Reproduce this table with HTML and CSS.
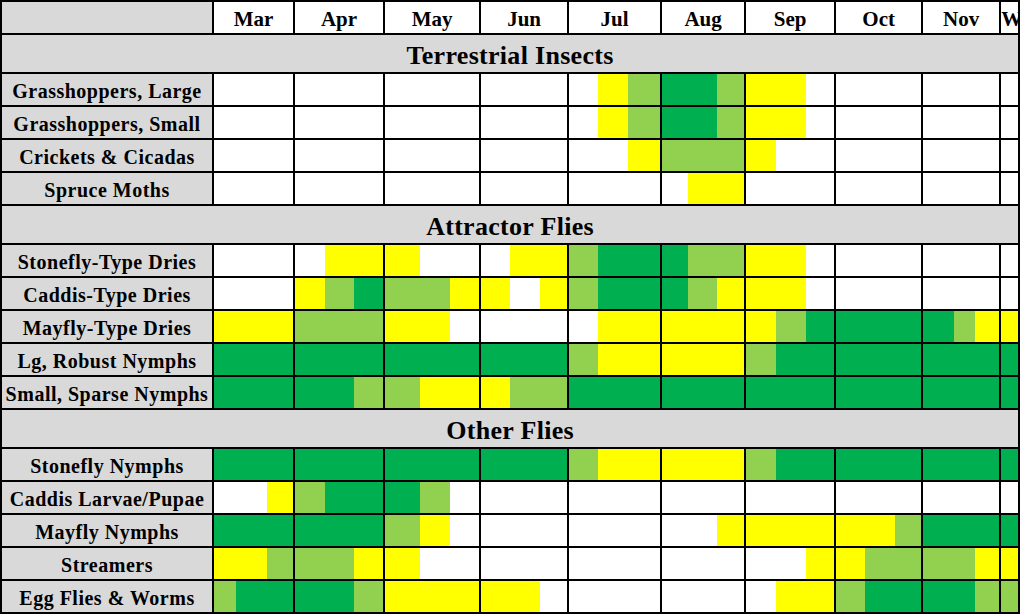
FILE: index.html
```html
<!DOCTYPE html>
<html>
<head>
<meta charset="utf-8">
<link rel="stylesheet" href="styles.css">
</head>
<body>
<table class="chart">
<colgroup class="lab"><col class="c0"></colgroup>
<colgroup class="mo"><col class="c1"><col class="c2"><col class="c3"></colgroup>
<colgroup class="mo"><col class="c4"><col class="c5"><col class="c6"></colgroup>
<colgroup class="mo"><col class="c7"><col class="c8"><col class="c9"></colgroup>
<colgroup class="mo"><col class="c10"><col class="c11"><col class="c12"></colgroup>
<colgroup class="mo"><col class="c13"><col class="c14"><col class="c15"></colgroup>
<colgroup class="mo"><col class="c16"><col class="c17"><col class="c18"></colgroup>
<colgroup class="mo"><col class="c19"><col class="c20"><col class="c21"></colgroup>
<colgroup class="mo"><col class="c22"><col class="c23"><col class="c24"></colgroup>
<colgroup class="mo"><col class="c25"><col class="c26"><col class="c27"></colgroup>
<colgroup class="mo"><col class="c28"></colgroup>
<tr class="head"><th class="corner"></th><th colspan="3">Mar</th><th colspan="3">Apr</th><th colspan="3">May</th><th colspan="3">Jun</th><th colspan="3">Jul</th><th colspan="3">Aug</th><th colspan="3">Sep</th><th colspan="3">Oct</th><th colspan="3">Nov</th><th class="wcell">W</th></tr>

<tr class="sec"><td colspan="29">Terrestrial Insects</td></tr>
<tr class="row"><th>Grasshoppers, Large</th><td></td><td></td><td></td><td></td><td></td><td></td><td></td><td></td><td></td><td></td><td></td><td></td><td></td><td class="y"></td><td class="l"></td><td class="g"></td><td class="g"></td><td class="l"></td><td class="y"></td><td class="y"></td><td></td><td></td><td></td><td></td><td></td><td></td><td></td><td></td></tr>
<tr class="row"><th>Grasshoppers, Small</th><td></td><td></td><td></td><td></td><td></td><td></td><td></td><td></td><td></td><td></td><td></td><td></td><td></td><td class="y"></td><td class="l"></td><td class="g"></td><td class="g"></td><td class="l"></td><td class="y"></td><td class="y"></td><td></td><td></td><td></td><td></td><td></td><td></td><td></td><td></td></tr>
<tr class="row"><th>Crickets &amp; Cicadas</th><td></td><td></td><td></td><td></td><td></td><td></td><td></td><td></td><td></td><td></td><td></td><td></td><td></td><td></td><td class="y"></td><td class="l"></td><td class="l"></td><td class="l"></td><td class="y"></td><td></td><td></td><td></td><td></td><td></td><td></td><td></td><td></td><td></td></tr>
<tr class="row"><th>Spruce Moths</th><td></td><td></td><td></td><td></td><td></td><td></td><td></td><td></td><td></td><td></td><td></td><td></td><td></td><td></td><td></td><td></td><td class="y"></td><td class="y"></td><td></td><td></td><td></td><td></td><td></td><td></td><td></td><td></td><td></td><td></td></tr>

<tr class="sec"><td colspan="29">Attractor Flies</td></tr>
<tr class="row"><th>Stonefly-Type Dries</th><td></td><td></td><td></td><td></td><td class="y"></td><td class="y"></td><td class="y"></td><td></td><td></td><td></td><td class="y"></td><td class="y"></td><td class="l"></td><td class="g"></td><td class="g"></td><td class="g"></td><td class="l"></td><td class="l"></td><td class="y"></td><td class="y"></td><td></td><td></td><td></td><td></td><td></td><td></td><td></td><td></td></tr>
<tr class="row"><th>Caddis-Type Dries</th><td></td><td></td><td></td><td class="y"></td><td class="l"></td><td class="g"></td><td class="l"></td><td class="l"></td><td class="y"></td><td class="y"></td><td></td><td class="y"></td><td class="l"></td><td class="g"></td><td class="g"></td><td class="g"></td><td class="l"></td><td class="y"></td><td class="y"></td><td class="y"></td><td></td><td></td><td></td><td></td><td></td><td></td><td></td><td></td></tr>
<tr class="row"><th>Mayfly-Type Dries</th><td class="y"></td><td class="y"></td><td class="y"></td><td class="l"></td><td class="l"></td><td class="l"></td><td class="y"></td><td class="y"></td><td></td><td></td><td></td><td></td><td></td><td class="y"></td><td class="y"></td><td class="y"></td><td class="y"></td><td class="y"></td><td class="y"></td><td class="l"></td><td class="g"></td><td class="g"></td><td class="g"></td><td class="g"></td><td class="g"></td><td class="l"></td><td class="y"></td><td class="y"></td></tr>
<tr class="row"><th>Lg, Robust Nymphs</th><td class="g"></td><td class="g"></td><td class="g"></td><td class="g"></td><td class="g"></td><td class="g"></td><td class="g"></td><td class="g"></td><td class="g"></td><td class="g"></td><td class="g"></td><td class="g"></td><td class="l"></td><td class="y"></td><td class="y"></td><td class="y"></td><td class="y"></td><td class="y"></td><td class="l"></td><td class="g"></td><td class="g"></td><td class="g"></td><td class="g"></td><td class="g"></td><td class="g"></td><td class="g"></td><td class="g"></td><td class="g"></td></tr>
<tr class="row"><th>Small, Sparse Nymphs</th><td class="g"></td><td class="g"></td><td class="g"></td><td class="g"></td><td class="g"></td><td class="l"></td><td class="l"></td><td class="y"></td><td class="y"></td><td class="y"></td><td class="l"></td><td class="l"></td><td class="g"></td><td class="g"></td><td class="g"></td><td class="g"></td><td class="g"></td><td class="g"></td><td class="g"></td><td class="g"></td><td class="g"></td><td class="g"></td><td class="g"></td><td class="g"></td><td class="g"></td><td class="g"></td><td class="g"></td><td class="g"></td></tr>

<tr class="sec"><td colspan="29">Other Flies</td></tr>
<tr class="row"><th>Stonefly Nymphs</th><td class="g"></td><td class="g"></td><td class="g"></td><td class="g"></td><td class="g"></td><td class="g"></td><td class="g"></td><td class="g"></td><td class="g"></td><td class="g"></td><td class="g"></td><td class="g"></td><td class="l"></td><td class="y"></td><td class="y"></td><td class="y"></td><td class="y"></td><td class="y"></td><td class="l"></td><td class="g"></td><td class="g"></td><td class="g"></td><td class="g"></td><td class="g"></td><td class="g"></td><td class="g"></td><td class="g"></td><td class="g"></td></tr>
<tr class="row"><th>Caddis Larvae/Pupae</th><td></td><td></td><td class="y"></td><td class="l"></td><td class="g"></td><td class="g"></td><td class="g"></td><td class="l"></td><td></td><td></td><td></td><td></td><td></td><td></td><td></td><td></td><td></td><td></td><td></td><td></td><td></td><td></td><td></td><td></td><td></td><td></td><td></td><td></td></tr>
<tr class="row"><th>Mayfly Nymphs</th><td class="g"></td><td class="g"></td><td class="g"></td><td class="g"></td><td class="g"></td><td class="g"></td><td class="l"></td><td class="y"></td><td></td><td></td><td></td><td></td><td></td><td></td><td></td><td></td><td></td><td class="y"></td><td class="y"></td><td class="y"></td><td class="y"></td><td class="y"></td><td class="y"></td><td class="l"></td><td class="g"></td><td class="g"></td><td class="g"></td><td class="g"></td></tr>
<tr class="row"><th>Streamers</th><td class="y"></td><td class="y"></td><td class="l"></td><td class="l"></td><td class="l"></td><td class="y"></td><td class="y"></td><td></td><td></td><td></td><td></td><td></td><td></td><td></td><td></td><td></td><td></td><td></td><td></td><td></td><td class="y"></td><td class="y"></td><td class="l"></td><td class="l"></td><td class="l"></td><td class="l"></td><td class="y"></td><td class="y"></td></tr>
<tr class="row"><th>Egg Flies &amp; Worms</th><td class="l"></td><td class="g"></td><td class="g"></td><td class="g"></td><td class="g"></td><td class="l"></td><td class="y"></td><td class="y"></td><td class="y"></td><td class="y"></td><td class="y"></td><td></td><td></td><td></td><td></td><td></td><td></td><td></td><td></td><td class="y"></td><td class="y"></td><td class="l"></td><td class="g"></td><td class="g"></td><td class="g"></td><td class="g"></td><td class="l"></td><td class="l"></td></tr>
</table>
</body>
</html>
```
FILE: styles.css
```css
html, body {
  margin: 0;
  padding: 0;
  background: #ffffff;
  overflow: hidden;
}
.chart {
  margin: 0;
  border-collapse: collapse;
  table-layout: fixed;
  width: 1018px;
  font-family: "Liberation Serif", "Times New Roman", serif;
  font-weight: bold;
  color: #000;
}
.chart colgroup {
  border-left: 2px solid #000;
  border-right: 2px solid #000;
}
.chart td, .chart th {
  border-top: 2px solid #000;
  border-bottom: 2px solid #000;
  padding: 0;
  overflow: hidden;
  white-space: nowrap;
}
.c0 { width: 212px; }
.c1 { width: 23px; } .c2 { width: 31px; } .c3 { width: 27px; }
.c4 { width: 31px; } .c5 { width: 29px; } .c6 { width: 30px; }
.c7 { width: 36px; } .c8 { width: 30px; } .c9 { width: 30px; }
.c10 { width: 30px; } .c11 { width: 30px; } .c12 { width: 28px; }
.c13 { width: 30px; } .c14 { width: 30px; } .c15 { width: 33px; }
.c16 { width: 27px; } .c17 { width: 29px; } .c18 { width: 28px; }
.c19 { width: 31px; } .c20 { width: 30px; } .c21 { width: 29px; }
.c22 { width: 30px; } .c23 { width: 30px; } .c24 { width: 27px; }
.c25 { width: 32px; } .c26 { width: 21px; } .c27 { width: 25px; }
.c28 { width: 19px; }

.head th {
  height: 27px;
  font-size: 21px;
  text-align: center;
  vertical-align: middle;
  padding-top: 4px;
  background: #ffffff;
}
.head th.corner { background: #d9d9d9; }
.head th.wcell { text-align: left; }
.sec td {
  height: 33px;
  background: #d9d9d9;
  font-size: 26px;
  text-align: center;
  vertical-align: middle;
  padding-top: 4px;
  letter-spacing: 0.3px;
}
.row th, .row td { height: 28px; }
.row th {
  background: #d9d9d9;
  font-size: 20px;
  letter-spacing: 0.5px;
  text-align: center;
  vertical-align: middle;
  padding-top: 3px;
}
.row td { background: #ffffff; }
.row td.y { background: #ffff00; }
.row td.l { background: #92d050; }
.row td.g { background: #00b050; }
```
